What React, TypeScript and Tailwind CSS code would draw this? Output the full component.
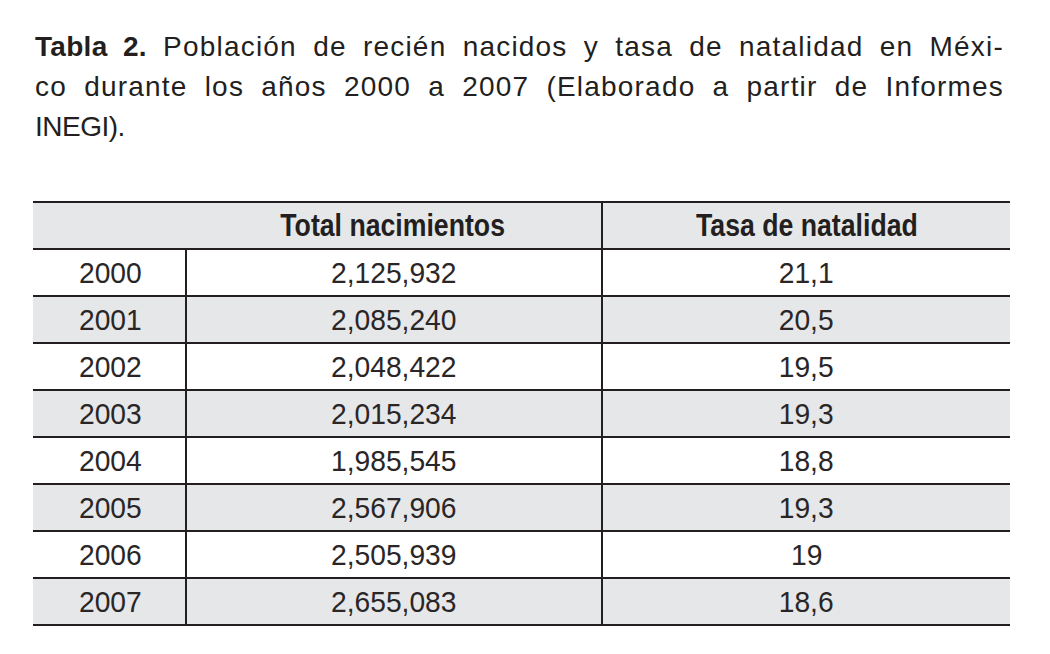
import React from "react";

const rows: [string, string, string][] = [
  ["2000", "2,125,932", "21,1"],
  ["2001", "2,085,240", "20,5"],
  ["2002", "2,048,422", "19,5"],
  ["2003", "2,015,234", "19,3"],
  ["2004", "1,985,545", "18,8"],
  ["2005", "2,567,906", "19,3"],
  ["2006", "2,505,939", "19"],
  ["2007", "2,655,083", "18,6"],
];

function Num({ children }: { children: React.ReactNode }) {
  return <span className="inline-block scale-x-[0.94]">{children}</span>;
}

export default function App() {
  return (
    <div className="w-[1050px] h-[654px] bg-white text-[#231f20] overflow-hidden">
      <div className="pt-[27px] pl-[35px] w-[1004px] font-['Liberation_Sans',Arial,sans-serif] text-[28px] leading-[40px] tracking-[1.2px]">
        <div className="text-justify [text-align-last:justify]">
          <span className="font-bold tracking-[0.3px]">Tabla 2.</span> Población de recién nacidos y tasa de natalidad en Méxi-
        </div>
        <div className="text-justify [text-align-last:justify]">
          co durante los años 2000 a 2007 (Elaborado a partir de Informes
        </div>
        <div className="tracking-[-0.5px]">INEGI).</div>
      </div>
      <div className="mt-[54px] ml-[33px] w-[977px] border-t-2 border-[#231f20] font-['Liberation_Sans',Arial,sans-serif]">
        <div className="grid grid-cols-[152px_416px_409px] h-[47px] border-b-2 border-[#231f20] bg-[#e6e7e8] text-[31px] font-bold">
          <div></div>
          <div className="flex items-center justify-center">
            <span className="inline-block scale-x-[0.86]">Total nacimientos</span>
          </div>
          <div className="flex items-center justify-center border-l-2 border-[#231f20]">
            <span className="inline-block scale-x-[0.86]">Tasa de natalidad</span>
          </div>
        </div>
        {rows.map((r, i) => (
          <div
            key={r[0]}
            className={`grid grid-cols-[152px_416px_409px] h-[47px] border-b-2 border-[#231f20] text-[30px] text-[#2a2627] ${i % 2 === 1 ? "bg-[#e6e7e8]" : "bg-white"}`}
          >
            <div className="flex items-center justify-center pl-[2px]"><Num>{r[0]}</Num></div>
            <div className="flex items-center justify-center border-l-2 border-[#231f20]"><Num>{r[1]}</Num></div>
            <div className="flex items-center justify-center border-l-2 border-[#231f20]"><Num>{r[2]}</Num></div>
          </div>
        ))}
      </div>
    </div>
  );
}
